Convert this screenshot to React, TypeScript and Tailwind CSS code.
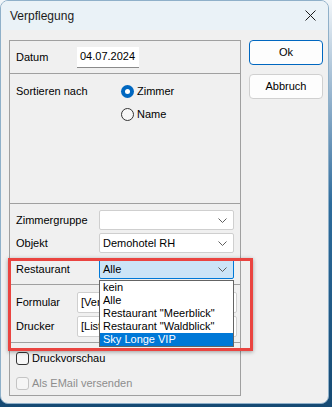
import { ReactNode } from 'react'

const FONT = { fontFamily: '"Liberation Sans", Arial, sans-serif' }

function Chevron({ color = '#5f5f5f' }: { color?: string }) {
  return (
    <svg width="9" height="5" viewBox="0 0 9 5" className="shrink-0">
      <polyline points="0.5,0.5 4.5,4.5 8.5,0.5" fill="none" stroke={color} strokeWidth="1" />
    </svg>
  )
}

function Combo({
  value,
  width,
  focused,
  height = 20,
}: {
  value: string
  width: number
  focused?: boolean
  height?: number
}) {
  return (
    <div
      className={`flex items-center justify-between pl-[3px] pr-[6px] rounded-[2px] border ${
        focused ? 'bg-[#cce4f7] border-[#0078d7]' : 'bg-white border-[#cfcfcf]'
      }`}
      style={{ width, height }}
    >
      <span className="text-[11px] text-black leading-none whitespace-nowrap">{value}</span>
      <Chevron />
    </div>
  )
}

function Row({ label, children, mt }: { label: string; children: ReactNode; mt: string }) {
  return (
    <div className={`flex items-center ${mt}`}>
      <span className="w-[83px] text-[11px] text-black leading-none">{label}</span>
      {children}
    </div>
  )
}

function Radio({ checked, label }: { checked?: boolean; label: string }) {
  return (
    <div className="flex items-center gap-[3px] h-[13px]">
      {checked ? (
        <span className="w-[13px] h-[13px] rounded-full bg-[#0067c0] flex items-center justify-center">
          <span className="w-[5px] h-[5px] rounded-full bg-white" />
        </span>
      ) : (
        <span className="w-[13px] h-[13px] rounded-full border border-[#333333] bg-[#f7f7f7]" />
      )}
      <span className="text-[11px] text-black leading-none">{label}</span>
    </div>
  )
}

function Check({ label, disabled }: { label: string; disabled?: boolean }) {
  return (
    <div className="flex items-center gap-[3px] h-[13px]">
      <span
        className={`w-[13px] h-[13px] rounded-[3px] border ${
          disabled ? 'border-[#c4c4c4] bg-[#f5f5f5]' : 'border-[#333333] bg-[#f7f7f7]'
        }`}
      />
      <span className={`text-[11px] leading-none ${disabled ? 'text-[#8d8d8d]' : 'text-black'}`}>
        {label}
      </span>
    </div>
  )
}

const OPTIONS = ['kein', 'Alle', 'Restaurant "Meerblick"', 'Restaurant "Waldblick"', 'Sky Longe VIP']

export default function App() {
  return (
    <div
      className="relative w-[332px] h-[407px] bg-gradient-to-b from-[#f2f6f9] via-[#2d6c9c] to-[#164a73]"
      style={FONT}
    >
      {/* ── Window ── */}
      <div className="w-[329px] h-[404px] rounded-[8px] overflow-hidden border border-[#8fb0c9] bg-[#f0f0f0] flex flex-col">
        {/* Title bar */}
        <div className="h-[29px] bg-[#eaf2f7] flex items-center justify-between pl-[9px] pr-[12px] shrink-0">
          <span className="text-[12px] text-[#1b1b1b]">Verpflegung</span>
          <svg width="11" height="11" viewBox="0 0 11 11">
            <path d="M0.5 0.5 L10.5 10.5 M10.5 0.5 L0.5 10.5" stroke="#1b1b1b" strokeWidth="1" />
          </svg>
        </div>

        {/* Body */}
        <div className="flex pl-[8px] pt-[10px]">
          {/* Group frame */}
          <div className="relative w-[232px] h-[356px] border border-[#a0a0a0] flex flex-col">
            {/* Datum */}
            <div className="h-[33px] border-b border-[#a0a0a0] flex items-center pl-[6px]">
              <span className="w-[61px] text-[11px] text-black leading-none">Datum</span>
              <div className="w-[62px] h-[21px] bg-white flex items-center pl-[3px] border-b border-[#8a8a8a]">
                <span className="text-[11px] text-black leading-none">04.07.2024</span>
              </div>
            </div>

            {/* Sortieren */}
            <div className="h-[130px] border-b border-[#a0a0a0] flex pl-[6px] pt-[11px]">
              <span className="w-[105px] text-[11px] text-black leading-[13px]">Sortieren nach</span>
              <div className="flex flex-col gap-[10px]">
                <Radio checked label="Zimmer" />
                <Radio label="Name" />
              </div>
            </div>

            {/* Combos */}
            <div className="h-[81px] border-b border-[#a0a0a0] flex flex-col pl-[6px]">
              <Row label="Zimmergruppe" mt="mt-[6px]">
                <Combo value="" width={135} />
              </Row>
              <Row label="Objekt" mt="mt-[3px]">
                <Combo value="Demohotel RH" width={135} />
              </Row>
              <Row label="Restaurant" mt="mt-[6px]">
                <Combo value="Alle" width={135} focused />
              </Row>
            </div>

            {/* Formular / Drucker (partly hidden behind the open list) */}
            <div className="h-[58px] border-b border-[#a0a0a0] flex flex-col pl-[6px]">
              <div className="flex items-center mt-[7px]">
                <span className="w-[61px] text-[11px] text-black leading-none">Formular</span>
                <Combo value="[Ver" width={160} height={21} />
              </div>
              <div className="flex items-center mt-[3px]">
                <span className="w-[61px] text-[11px] text-black leading-none">Drucker</span>
                <Combo value="[List" width={160} height={21} />
              </div>
            </div>

            {/* Checkboxes */}
            <div className="flex flex-col pl-[6px] pt-[9px] gap-[12px]">
              <Check label="Druckvorschau" />
              <Check label="Als EMail versenden" disabled />
            </div>

            {/* Open dropdown list */}
            <div className="absolute left-[89px] top-[239px] w-[135px] bg-white border border-[#646464] flex flex-col">
              {OPTIONS.map((o, i) => (
                <div
                  key={o}
                  className={`h-[13px] pl-[3px] flex items-center text-[11px] leading-none ${
                    i === OPTIONS.length - 1 ? 'bg-[#0078d7] text-white' : 'text-black'
                  }`}
                >
                  {o}
                </div>
              ))}
            </div>
          </div>

          {/* Buttons */}
          <div className="ml-[8px] flex flex-col gap-[9px]">
            <button className="w-[74px] h-[25px] rounded-[4px] border border-[#0067c0] bg-[#fdfdfd] text-[11px] text-black">
              Ok
            </button>
            <button className="w-[74px] h-[25px] rounded-[4px] border border-[#d0d0d0] bg-[#fdfdfd] text-[11px] text-black">
              Abbruch
            </button>
          </div>
        </div>
      </div>

      {/* Red annotation */}
      <div className="absolute left-[8px] top-[258px] w-[245px] h-[93px] border-[3px] border-[#ea4440] shadow-[0_1px_4px_rgba(0,0,0,0.35)]" />
    </div>
  )
}
